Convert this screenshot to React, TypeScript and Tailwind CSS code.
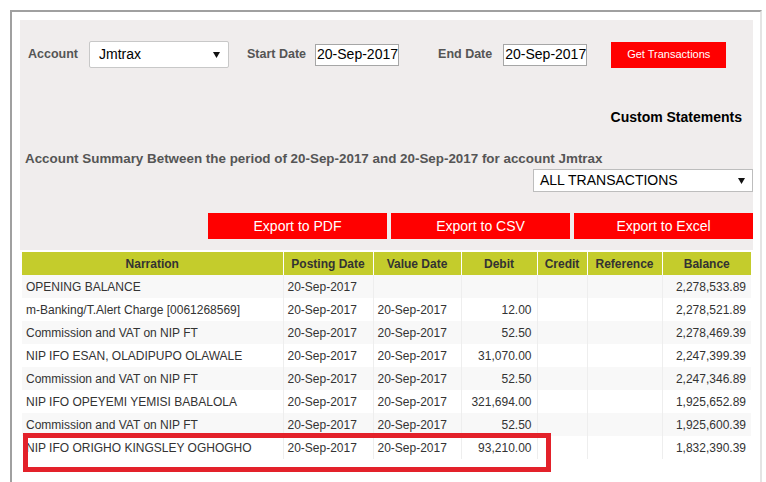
import React from "react";

const rows = [
  ["OPENING BALANCE", "20-Sep-2017", "", "", "", "", "2,278,533.89"],
  ["m-Banking/T.Alert Charge [0061268569]", "20-Sep-2017", "20-Sep-2017", "12.00", "", "", "2,278,521.89"],
  ["Commission and VAT on NIP FT", "20-Sep-2017", "20-Sep-2017", "52.50", "", "", "2,278,469.39"],
  ["NIP IFO ESAN, OLADIPUPO OLAWALE", "20-Sep-2017", "20-Sep-2017", "31,070.00", "", "", "2,247,399.39"],
  ["Commission and VAT on NIP FT", "20-Sep-2017", "20-Sep-2017", "52.50", "", "", "2,247,346.89"],
  ["NIP IFO OPEYEMI YEMISI BABALOLA", "20-Sep-2017", "20-Sep-2017", "321,694.00", "", "", "1,925,652.89"],
  ["Commission and VAT on NIP FT", "20-Sep-2017", "20-Sep-2017", "52.50", "", "", "1,925,600.39"],
  ["NIP IFO ORIGHO KINGSLEY OGHOGHO", "20-Sep-2017", "20-Sep-2017", "93,210.00", "", "", "1,832,390.39"],
];

const Arrow = () => (
  <svg width="7" height="6" viewBox="0 0 7 6" className="shrink-0">
    <path d="M0 0 H7 L3.5 6 Z" fill="#111" />
  </svg>
);

const DateInput = ({ value }: { value: string }) => (
  <div className="w-[84px] h-[22px] bg-white border border-[#a6a6a6] pl-[1px] flex items-center text-[14px] text-black whitespace-nowrap overflow-hidden">
    {value}
  </div>
);

const ExportButton = ({ label }: { label: string }) => (
  <button className="w-[179px] h-[26px] bg-[#ff0000] text-white text-[14px] flex items-center justify-center">
    {label}
  </button>
);

export default function App() {
  return (
    <div className="relative w-[766px] h-[482px] overflow-hidden bg-white pt-[10px] pl-[10px] font-['Liberation_Sans',Arial,sans-serif]">
      <div className="w-[752px] h-[480px] border-2 border-t-[#a0a0a0] border-l-[#a0a0a0] border-r-[#e4e4e4] border-b-[#e4e4e4] pt-[8px] pl-[8px] pr-[7px]">
        <div className="bg-[#f0eded] pt-[21px] pb-[11px]">
          <div className="flex items-center pl-[8px] h-[27px]">
            <span className="text-[12.5px] font-bold text-[#555]">Account</span>
            <div className="ml-[11px] w-[140px] h-[27px] bg-white border border-[#c8c8c8] rounded-[2px] flex items-center justify-between pl-[9px] pr-[8px] text-[14px] text-black">
              Jmtrax
              <Arrow />
            </div>
            <span className="ml-[18px] text-[12.5px] font-bold text-[#555]">Start Date</span>
            <div className="ml-[9px]">
              <DateInput value="20-Sep-2017" />
            </div>
            <span className="ml-[39px] text-[12.5px] font-bold text-[#555]">End Date</span>
            <div className="ml-[11px]">
              <DateInput value="20-Sep-2017" />
            </div>
            <button className="ml-[24px] w-[115px] h-[26px] bg-[#ff0000] text-white text-[11px] flex items-center justify-center">
              Get Transactions
            </button>
          </div>
          <div className="mt-[41px] pr-[11px] text-right text-[14px] font-bold text-black leading-[16px]">
            Custom Statements
          </div>
          <div className="mt-[26px] pl-[5px] text-[13.4px] font-bold text-[#555] leading-[15px] whitespace-nowrap">
            Account Summary Between the period of 20-Sep-2017 and 20-Sep-2017 for account Jmtrax
          </div>
          <div className="mt-[3px] flex justify-end">
            <div className="w-[220px] h-[23px] bg-white border border-[#bdbdbd] flex items-center justify-between pl-[6px] pr-[7px] text-[14px] text-black">
              ALL TRANSACTIONS
              <Arrow />
            </div>
          </div>
          <div className="mt-[21px] flex justify-end gap-[4px]">
            <ExportButton label="Export to PDF" />
            <ExportButton label="Export to CSV" />
            <ExportButton label="Export to Excel" />
          </div>
        </div>
        <table className="mt-[2px] ml-[2px] w-[729px] table-fixed border-collapse text-[12px] text-[#333]">
          <colgroup>
            <col className="w-[261px]" />
            <col className="w-[90px]" />
            <col className="w-[88px]" />
            <col className="w-[76px]" />
            <col className="w-[50px]" />
            <col className="w-[75px]" />
            <col className="w-[89px]" />
          </colgroup>
          <thead>
            <tr className="bg-[#c4cc2c] h-[23px]">
              {["Narration", "Posting Date", "Value Date", "Debit", "Credit", "Reference", "Balance"].map((h) => (
                <th key={h} className="font-bold text-center border-r border-white last:border-r-0 px-[2px]">
                  {h}
                </th>
              ))}
            </tr>
          </thead>
          <tbody>
            {rows.map((r, i) => (
              <tr key={i} className={i % 2 === 0 ? "bg-[#f8f8f8] h-[23px]" : "bg-white h-[23px]"}>
                {r.map((c, j) => (
                  <td
                    key={j}
                    className={
                      j >= 3 && j !== 4 && j !== 5
                        ? "text-right pr-[5px] border-r border-[#eeeeee] last:border-r-0 whitespace-nowrap"
                        : "text-left pl-[4px] border-r border-[#eeeeee] whitespace-nowrap"
                    }
                  >
                    {c}
                  </td>
                ))}
              </tr>
            ))}
          </tbody>
        </table>
      </div>
      <div className="absolute left-[23px] top-[433px] w-[528px] h-[39px] border-[5px] border-[#e3212a]" />
    </div>
  );
}
